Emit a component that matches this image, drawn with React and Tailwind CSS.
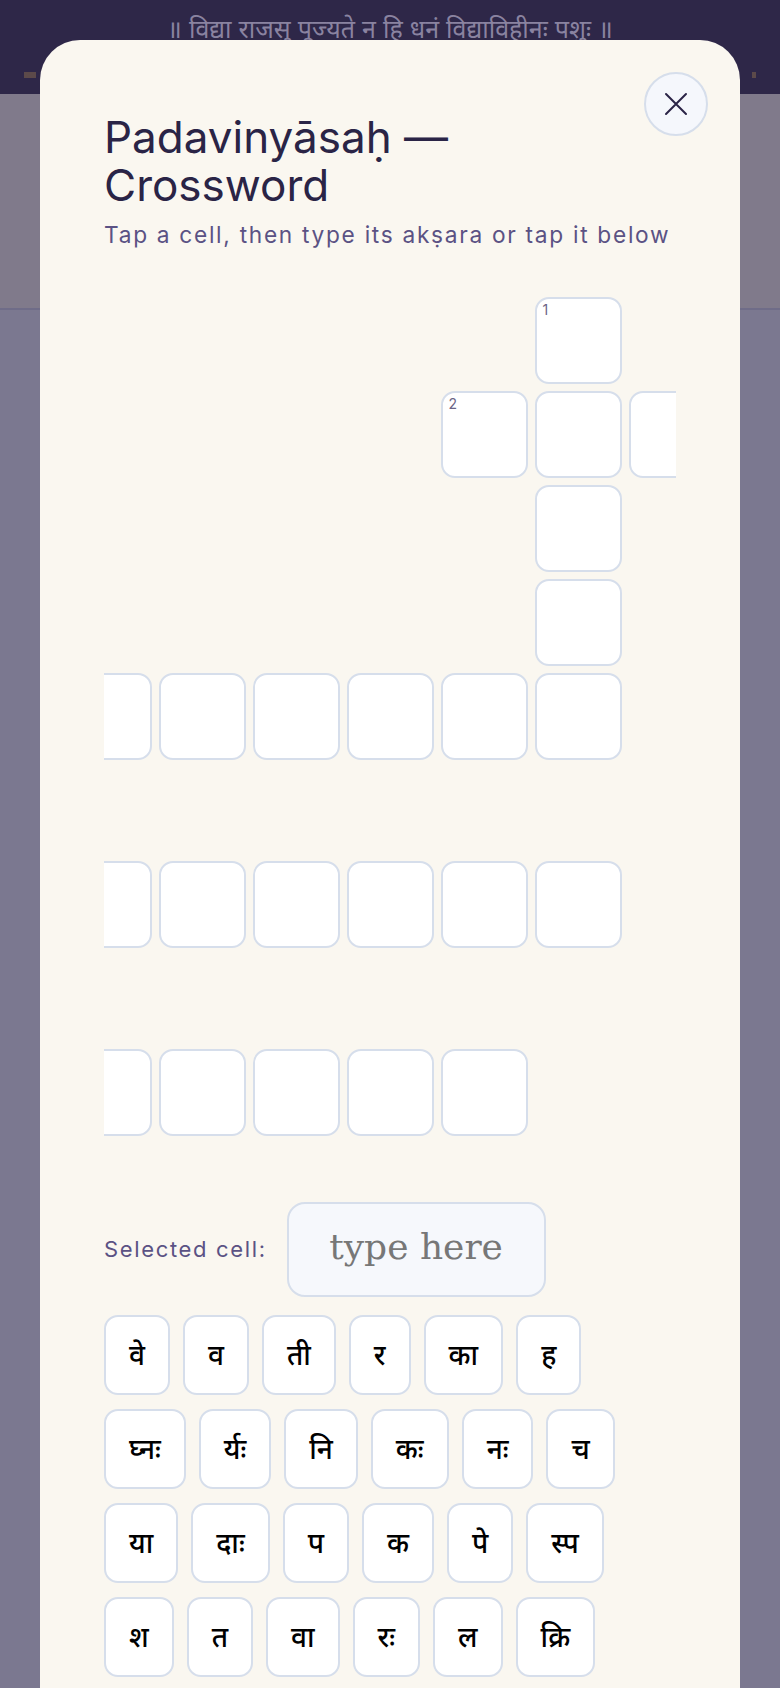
import React from "react";

const CELLS = [
  [[5, 1]],
  [[4, 2], [5], [6]],
  [[5]],
  [[5]],
  [[0, 3], [1], [2], [3], [4], [5]],
  [],
  [[0, 4], [1], [2], [3], [4], [5]],
  [],
  [[0, 5], [1], [2], [3], [4]],
];

const KEYS = [
  ["वे", "व", "ती", "र", "का", "ह"],
  ["घ्नः", "र्यः", "नि", "कः", "नः", "च"],
  ["या", "दाः", "प", "क", "पे", "स्प"],
  ["श", "त", "वा", "रः", "ल", "क्रि"],
];

const Cell = ({ num }) => (
  <div className="relative h-[87px] w-[87px] rounded-[14px] border-2 border-[#d6deeb] bg-white">
    {num && (
      <span className="absolute left-[6px] top-[3px] text-[14px] leading-4 text-[#6b6585]">
        {num}
      </span>
    )}
  </div>
);

const App = () => {
  return (
    <div
      className="relative h-[1688px] w-full overflow-hidden bg-[#7b7890]"
      style={{ fontFamily: "Inter, 'Noto Sans', sans-serif" }}
    >
      {/* page behind the overlay */}
      <div className="relative h-[94px] bg-[#2e2748]">
        <div className="pt-[11px] text-center text-[25px] text-[#8a83a0]">
          ॥ विद्या राजसु पूज्यते न हि धनं विद्याविहीनः पशुः ॥
        </div>
        <div className="absolute left-[24px] top-[72px] h-[6px] w-[12px] bg-[#5c4a4a]" />
        <div className="absolute right-[24px] top-[72px] h-[6px] w-[4px] bg-[#5c4a4a]" />
      </div>
      <div className="h-[216px] border-b-2 border-[#6f6c88] bg-[#807a8b]" />

      {/* modal */}
      <div className="absolute left-[40px] right-[40px] top-[40px] h-[1720px] rounded-[40px] bg-[#faf7f0] px-16 pt-[73px]">
        <button className="absolute right-8 top-8 flex h-16 w-16 items-center justify-center rounded-full border-2 border-[#d6deeb] bg-[#f5f7fc] text-[#2a2446]">
          <svg width="24" height="24" viewBox="0 0 24 24" fill="none" stroke="currentColor" strokeWidth="2" strokeLinecap="round">
            <path d="M2 2L22 22M22 2L2 22" />
          </svg>
        </button>

        <h1 className="text-[44px] font-normal leading-[48px] text-[#2a2446]">
          Padavinyāsaḥ —<br />Crossword
        </h1>
        <p className="mt-3 text-[22.7px] leading-7 tracking-[0.075em] text-[#5b5284]">
          Tap a cell, then type its akṣara or tap it below
        </p>

        {/* grid */}
        <div className="mt-12 flex justify-center overflow-hidden">
          <div className="flex shrink-0 flex-col gap-[7px]">
            {CELLS.map((row, r) => {
              const map = {};
              row.forEach(([c, n]) => (map[c] = n || true));
              return (
                <div key={r} className="flex gap-[7px]">
                  {[0, 1, 2, 3, 4, 5, 6].map((c) =>
                    map[c] ? (
                      <Cell key={c} num={map[c] === true ? null : map[c]} />
                    ) : (
                      <div key={c} className="h-[87px] w-[87px]" />
                    )
                  )}
                </div>
              );
            })}
          </div>
        </div>

        {/* selected cell */}
        <div className="mt-[66px] flex items-center gap-5">
          <span className="text-[22px] tracking-[0.075em] text-[#5b5284]">Selected cell:</span>
          <input
            placeholder="type here"
            className="h-[95px] w-[259px] rounded-[18px] border-2 border-[#d6deeb] bg-[#f6f8fc] pb-[6px] text-center text-[36px] text-[#2a2446] outline-none placeholder:text-[#777777]"
            style={{ fontFamily: "'DejaVu Serif', serif" }}
          />
        </div>

        {/* akshara keys */}
        <div className="mt-[18px] flex flex-col gap-[14px]">
          {KEYS.map((row, i) => (
            <div key={i} className="flex gap-[13px]">
              {row.map((k) => (
                <button
                  key={k}
                  className="flex h-[80px] min-w-[61px] items-center justify-center rounded-[14px] border-2 border-[#d6deeb] bg-white px-[23px] text-[28px] font-medium text-black"
                >
                  {k}
                </button>
              ))}
            </div>
          ))}
        </div>
      </div>
    </div>
  );
};

export default App;
